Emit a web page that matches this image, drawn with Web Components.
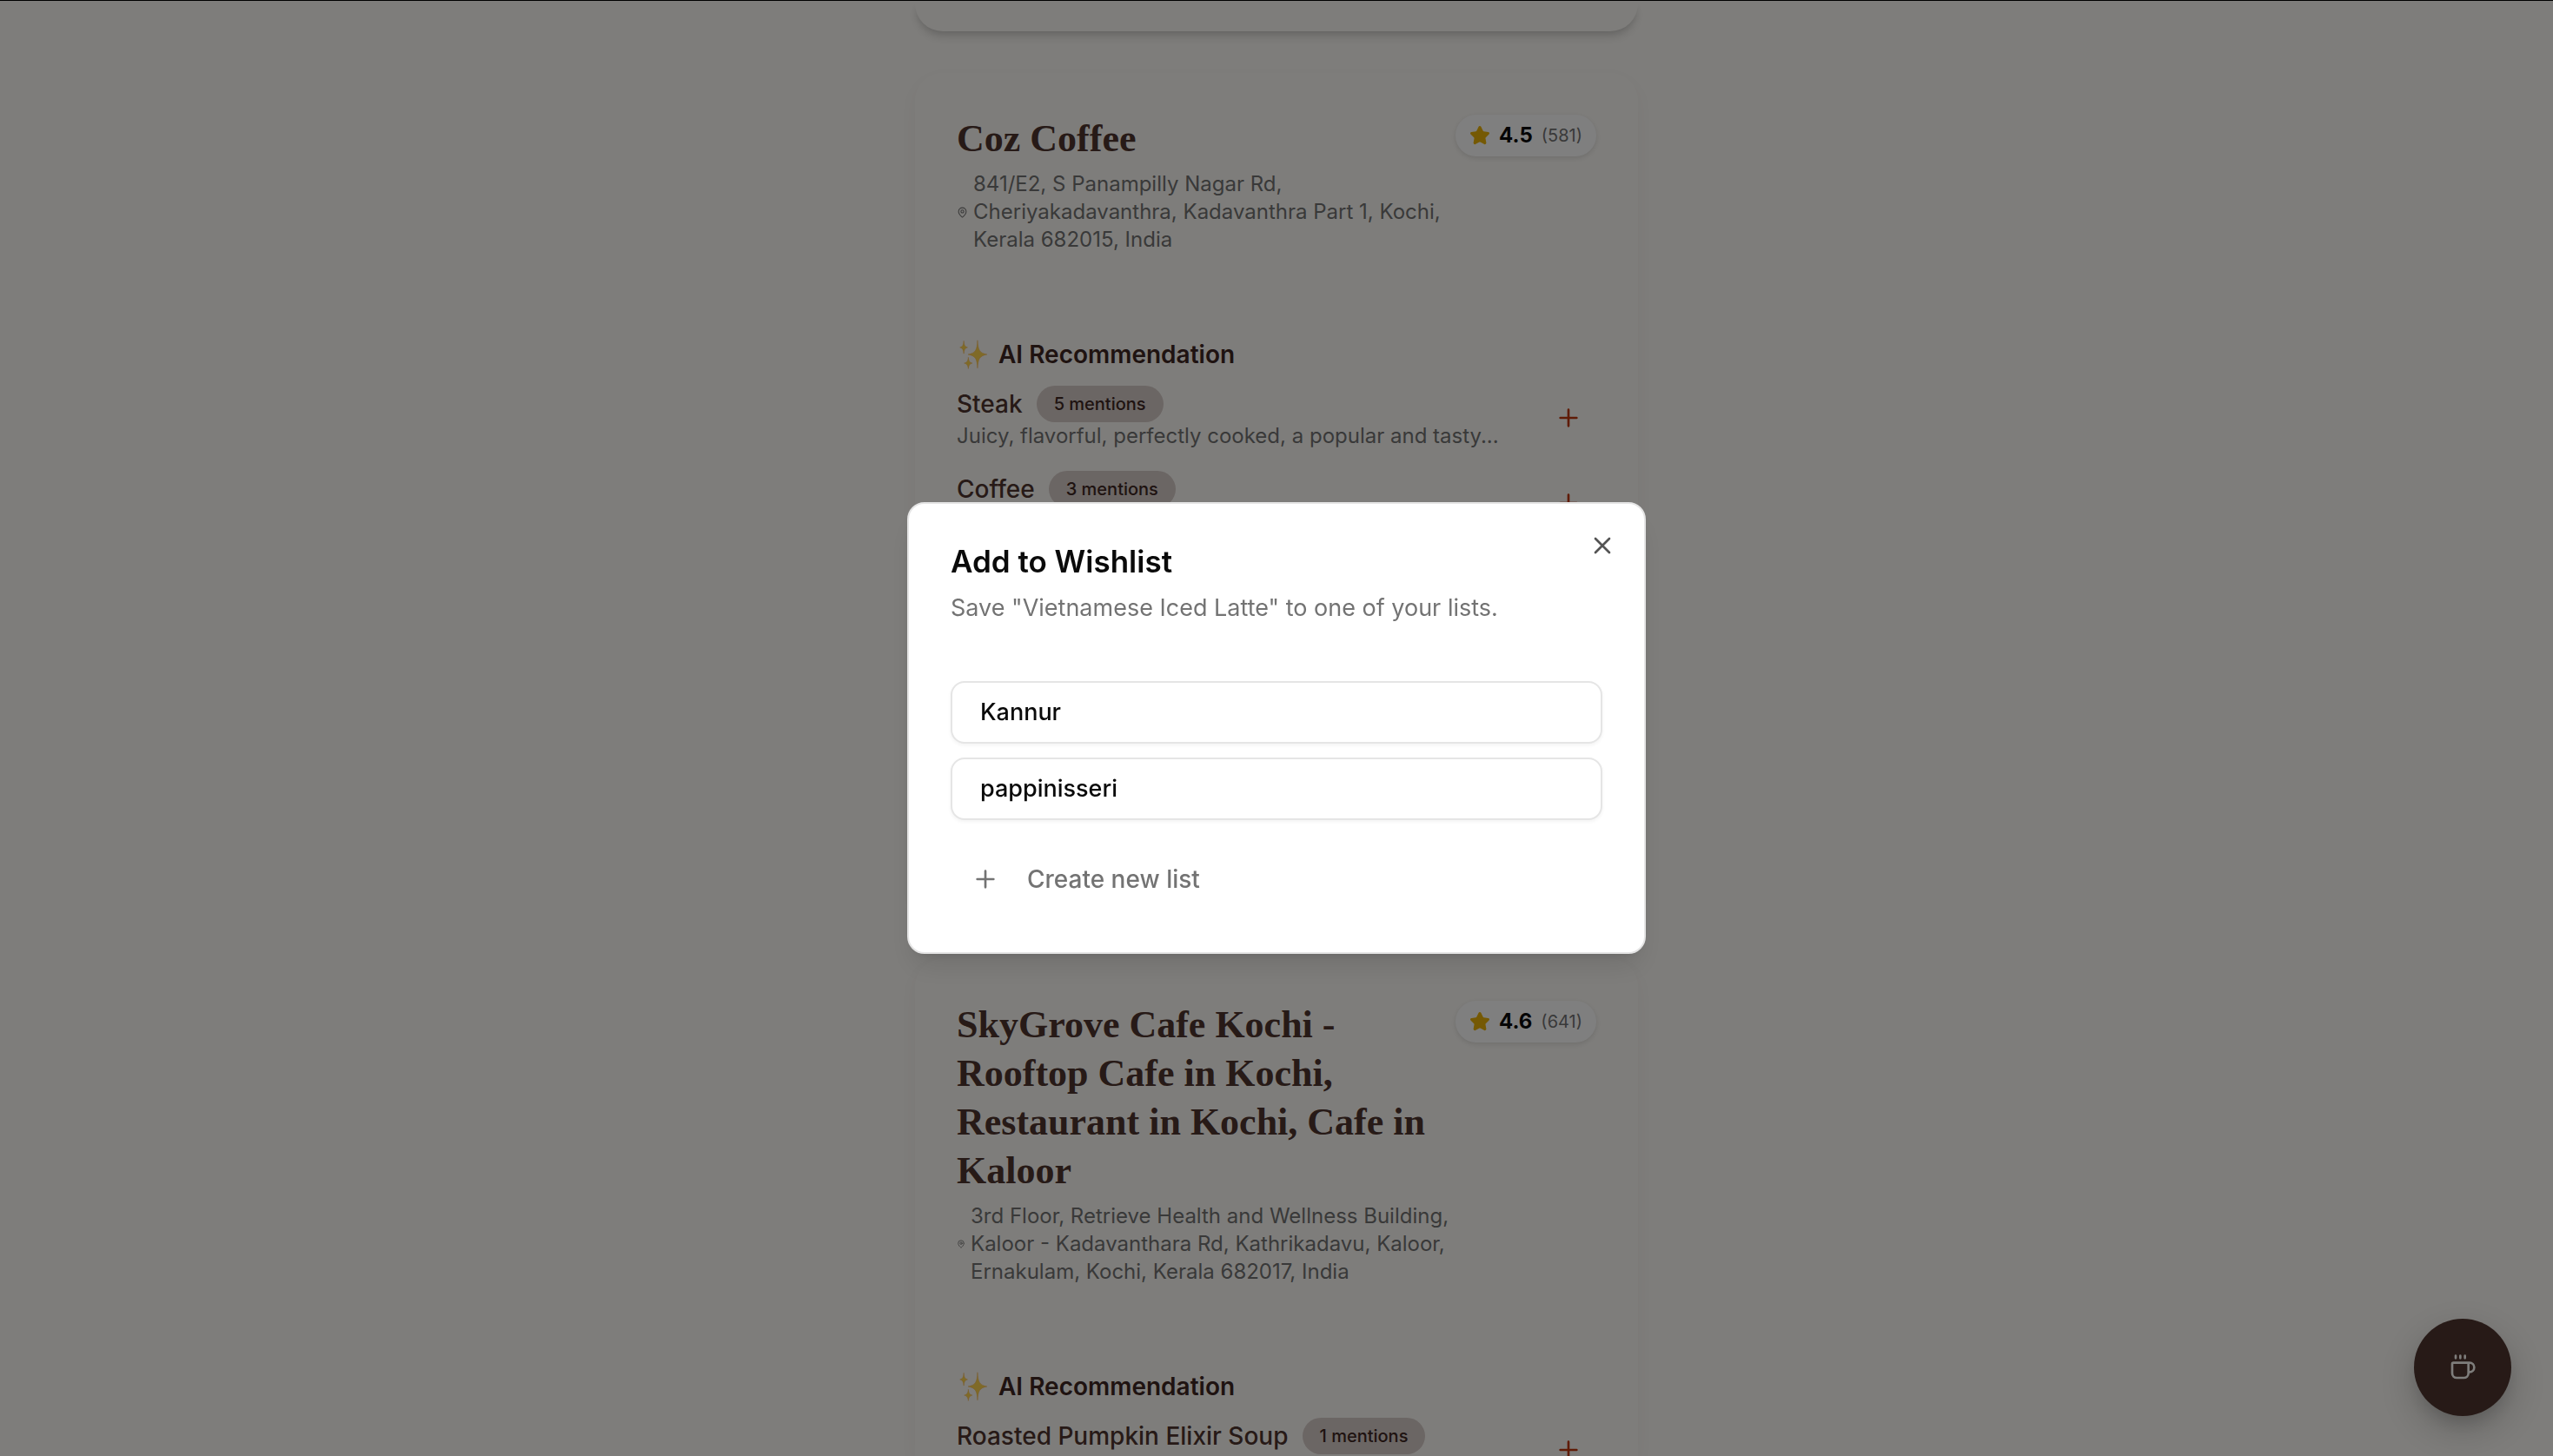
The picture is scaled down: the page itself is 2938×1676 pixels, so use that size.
<!DOCTYPE html>
<html lang="en">
<head>
<meta charset="utf-8">
<meta name="viewport" content="width=device-width, initial-scale=1">
<title>Cafes</title>
<style>
  html {
    height: 100%;
    overflow: hidden;
    background: #fdfbf7;
  }

  body {
    display: flex;
    flex-direction: column;
    height: 100%;
    margin: 0;
    box-sizing: border-box;
    overflow: hidden;
    border-top: 1px solid #000;
    color: #0a0a0a;
    font-family: Inter, "Liberation Sans", sans-serif;
    font-size: 28px;
    line-height: 40px;
  }
</style>
</head>
<body>

<cafe-feed>
  <cafe-card class="previous"></cafe-card>

  <cafe-card rating="4.5" reviews="581" pin="13">
    <span slot="name">Coz Coffee</span>
    <span slot="address">841/E2, S Panampilly Nagar Rd,<br>Cheriyakadavanthra, Kadavanthra Part 1, Kochi,<br>Kerala 682015, India</span>
    <dish-row mentions="5">
      Steak
      <span slot="note">Juicy, flavorful, perfectly cooked, a popular and tasty...</span>
    </dish-row>
    <dish-row mentions="3">Coffee</dish-row>
  </cafe-card>

  <cafe-card class="last" rating="4.6" reviews="641" pin="10">
    <span slot="name">SkyGrove Cafe Kochi - Rooftop Cafe in Kochi, Restaurant in Kochi, Cafe in Kaloor</span>
    <span slot="address">3rd Floor, Retrieve Health and Wellness Building,<br>Kaloor - Kadavanthara Rd, Kathrikadavu, Kaloor,<br>Ernakulam, Kochi, Kerala 682017, India</span>
    <dish-row mentions="1">Roasted Pumpkin Elixir Soup</dish-row>
  </cafe-card>
</cafe-feed>

<coffee-fab></coffee-fab>

<wishlist-dialog>
  <span slot="title">Add to Wishlist</span>
  <span slot="description">Save "Vietnamese Iced Latte" to one of your lists.</span>
  <list-option>Kannur</list-option>
  <list-option>pappinisseri</list-option>
</wishlist-dialog>

<script>
const ICONS = {
  plus: '<path d="M5 12h14M12 5v14"/>',
  close: '<path d="M18 6 6 18M6 6l12 12"/>',
  pin: '<path d="M20 10c0 5-5.5 10.2-7.4 11.8a1 1 0 0 1-1.2 0C9.5 20.2 4 15 4 10a8 8 0 0 1 16 0"/><circle cx="12" cy="10" r="3"/>',
  star: '<path fill="currentColor" d="M11.5 2.3a.53.53 0 0 1 .95 0l2.3 4.7a2.1 2.1 0 0 0 1.6 1.2l5.2.75a.53.53 0 0 1 .3.9l-3.75 3.65a2.1 2.1 0 0 0-.6 1.9l.9 5.14a.53.53 0 0 1-.77.56l-4.62-2.43a2.1 2.1 0 0 0-1.97 0L6.4 21.1a.53.53 0 0 1-.77-.56l.88-5.14a2.1 2.1 0 0 0-.6-1.88L2.16 9.8a.53.53 0 0 1 .3-.9l5.16-.76a2.1 2.1 0 0 0 1.6-1.16z"/>',
  coffee: '<path d="M10 2v2M14 2v2M6 2v2M16 8a1 1 0 0 1 1 1v8a4 4 0 0 1-4 4H7a4 4 0 0 1-4-4V9a1 1 0 0 1 1-1h14a4 4 0 1 1 0 8h-1"/>',
  sparkles: `<g fill="#ffd54f" stroke="#f0a93c" stroke-width=".3">
    <path d="M15.5.8C16 8.500 17 10.700 23.200 12 17 13.300 16 15.500 15.500 23.200 15 15.500 14 13.300 7.800 12 14 10.700 15 8.500 15.500.8Z"/>
    <path d="M4.300 1.200C4.600 4.300 5.200 5.700 7.400 6.300 5.200 6.900 4.600 8.300 4.300 11.400 4 8.300 3.400 6.900 1.200 6.300 3.400 5.700 4 4.300 4.300 1.200Z"/>
    <path d="M8 14.600C8.300 17.300 9 18.500 11.300 19.100 9 19.700 8.300 20.900 8 23.600 7.700 20.900 7 19.700 4.700 19.100 7 18.500 7.700 17.300 8 14.600Z"/>
  </g>`,
};

class AppIcon extends HTMLElement {
  connectedCallback() {
    const size = Number(this.getAttribute('size')) || 32;
    this.attachShadow({ mode: 'open' }).innerHTML = `
      <style>
        :host { display: block; flex: none; }
        svg { display: block; }
      </style>
      <svg width="${size}" height="${size}" viewBox="0 0 24 24" fill="none" stroke="currentColor"
        stroke-width="2" stroke-linecap="round" stroke-linejoin="round" aria-hidden="true">
        ${ICONS[this.getAttribute('name')]}
      </svg>
    `;
  }
}

class CafeFeed extends HTMLElement {
  constructor() {
    super();
    this.attachShadow({ mode: 'open' }).innerHTML = `
      <style>
        :host {
          display: flex;
          flex: 1;
          justify-content: center;
          min-height: 0;
          overflow: hidden;
        }
        main {
          display: flex;
          flex-direction: column;
          gap: 48px;
          width: 100%;
          max-width: 832px;
        }

        /* tail of the card that is scrolled out of view */
        ::slotted(.previous) {
          --card-radius: 0 0 32px 32px;
          --card-height: 35px;
          --card-shadow: 0 8px 12px -2px rgba(0, 0, 0, 0.14), 0 4px 8px -4px rgba(0, 0, 0, 0.12);
        }

        /* runs on below the fold, so it takes what is left */
        ::slotted(.last) {
          --card-radius: 32px 32px 0 0;
          --card-height: 0;
          flex: 1;
          overflow: hidden;
          clip-path: inset(-24px -32px 0);
        }
      </style>
      <main><slot></slot></main>
    `;
  }
}

class RatingPill extends HTMLElement {
  connectedCallback() {
    this.attachShadow({ mode: 'open' }).innerHTML = `
      <style>
        :host {
          display: flex;
          flex: none;
          align-items: center;
          gap: 10px;
          height: 48px;
          padding: 0 16px;
          border-radius: 24px;
          background: #fff;
          box-sizing: border-box;
          box-shadow: 0 2px 6px rgba(0, 0, 0, 0.12);
          font-size: 24px;
          line-height: 32px;
        }
        app-icon { color: #eab308; }
        b { color: #0a0a0a; font-weight: 700; }
        small { color: #737373; font-size: 20px; }
      </style>
      <app-icon name="star" size="24"></app-icon>
      <b>${this.getAttribute('value')}</b>
      <small>(${this.getAttribute('reviews')})</small>
    `;
  }
}

class CafeCard extends HTMLElement {
  connectedCallback() {
    const rating = this.getAttribute('rating');
    this.attachShadow({ mode: 'open' }).innerHTML = `
      <style>
        :host {
          display: block;
          flex: none;
          box-sizing: border-box;
          min-height: var(--card-height, 972px);
          border-radius: var(--card-radius, 32px);
          background: #fdfbf7;
          box-shadow: var(--card-shadow, 0 8px 24px rgba(78, 52, 46, 0.06));
        }
        article { padding: 48px 48px 0; }
        header {
          display: flex;
          align-items: flex-start;
          justify-content: space-between;
          gap: 16px;
          margin-bottom: 96px;
        }
        .info {
          flex: 1;
          min-width: 0;
        }
        h2 {
          margin: 0 0 8px;
          color: #4e342e;
          font-family: "Liberation Serif", serif;
          font-size: 44px;
          font-weight: 700;
          line-height: 56px;
        }
        .address {
          display: flex;
          align-items: center;
          gap: 6px;
          margin: 0;
          color: #737373;
          font-size: 24px;
          line-height: 32px;
          white-space: nowrap;
        }
        h3 {
          display: flex;
          align-items: center;
          gap: 12px;
          margin: 0 0 16px;
          padding-left: 2px;
          color: #3e2723;
          font-size: 28px;
          font-weight: 600;
          line-height: 40px;
        }
        .dishes {
          display: flex;
          flex-direction: column;
          gap: 24px;
        }
      </style>
      ${rating ? `
      <article>
        <header>
          <div class="info">
            <h2><slot name="name"></slot></h2>
            <p class="address">
              <app-icon name="pin" size="${this.getAttribute('pin')}"></app-icon>
              <slot name="address"></slot>
            </p>
          </div>
          <rating-pill value="${rating}" reviews="${this.getAttribute('reviews')}"></rating-pill>
        </header>
        <h3><app-icon name="sparkles" size="34"></app-icon>AI Recommendation</h3>
        <div class="dishes"><slot></slot></div>
      </article>` : ''}
    `;
  }
}

class DishRow extends HTMLElement {
  connectedCallback() {
    this.attachShadow({ mode: 'open' }).innerHTML = `
      <style>
        :host {
          display: flex;
          align-items: center;
          justify-content: space-between;
          min-height: 74px;
        }
        .text { align-self: flex-start; }
        .name {
          display: flex;
          align-items: center;
          gap: 16px;
          height: 42px;
          color: #4e342e;
          font-weight: 500;
        }
        .mentions {
          padding: 5px 20px;
          border-radius: 21px;
          background: #d7ccc8;
          color: #3e2723;
          font-size: 20px;
          line-height: 32px;
        }
        .note {
          color: #737373;
          font-size: 24px;
          line-height: 32px;
        }
        button {
          display: grid;
          place-items: center;
          width: 64px;
          height: 64px;
          padding: 0;
          border: 0;
          background: none;
          color: #bf360c;
        }
      </style>
      <div class="text">
        <div class="name">
          <span><slot></slot></span>
          <span class="mentions">${this.getAttribute('mentions')} mentions</span>
        </div>
        <div class="note"><slot name="note"></slot></div>
      </div>
      <button type="button" aria-label="Add to wishlist"><app-icon name="plus"></app-icon></button>
    `;
  }
}

class CoffeeFab extends HTMLElement {
  constructor() {
    super();
    this.attachShadow({ mode: 'open' }).innerHTML = `
      <style>
        :host {
          display: block;
          position: fixed;
          right: 48px;
          bottom: 46px;
        }
        button {
          display: grid;
          place-items: center;
          width: 112px;
          height: 112px;
          padding: 0;
          border: 0;
          border-radius: 50%;
          background: #4e342e;
          color: #fdfbf7;
          box-shadow: 0 16px 48px rgba(0, 0, 0, 0.2), 0 12px 24px -8px rgba(0, 0, 0, 0.2);
        }
      </style>
      <button type="button" aria-label="Coffee menu"><app-icon name="coffee"></app-icon></button>
    `;
  }
}

class ListOption extends HTMLElement {
  constructor() {
    super();
    this.attachShadow({ mode: 'open' }).innerHTML = `
      <style>
        :host { display: block; }
        button {
          display: block;
          box-sizing: border-box;
          width: 100%;
          height: 72px;
          padding: 0 32px;
          border: 2px solid #e5e5e5;
          border-radius: 16px;
          background: #fff;
          box-shadow: 0 2px 4px rgba(0, 0, 0, 0.05);
          color: #0a0a0a;
          font: inherit;
          font-weight: 500;
          text-align: left;
        }
      </style>
      <button type="button"><slot></slot></button>
    `;
  }
}

class WishlistDialog extends HTMLElement {
  constructor() {
    super();
    this.attachShadow({ mode: 'open' }).innerHTML = `
      <style>
        :host {
          display: grid;
          place-items: center;
          position: fixed;
          inset: 0;
          background: rgba(0, 0, 0, 0.5);
          font-size: 27px;
        }
        section {
          position: relative;
          box-sizing: border-box;
          width: 100%;
          max-width: 850px;
          padding: 48px;
          border: 2px solid #e5e5e5;
          border-radius: 20px;
          background: #fff;
          box-shadow: 0 20px 30px -6px rgba(0, 0, 0, 0.1), 0 8px 12px -8px rgba(0, 0, 0, 0.1);
        }
        h2 {
          margin: 0 0 16px;
          font-size: 35px;
          font-weight: 600;
          line-height: 36px;
        }
        p {
          margin: 0 0 64px;
          color: #737373;
        }
        .lists {
          display: flex;
          flex-direction: column;
          gap: 16px;
          margin-bottom: 32px;
        }
        button {
          padding: 0;
          border: 0;
          background: none;
          font: inherit;
        }
        .create {
          display: flex;
          align-items: center;
          gap: 32px;
          width: 100%;
          height: 72px;
          padding: 0 24px;
          color: #737373;
          font-size: 28px;
          font-weight: 500;
        }
        .close {
          position: absolute;
          top: 32px;
          right: 32px;
          color: #545454;
        }
      </style>
      <section role="dialog" aria-modal="true" aria-labelledby="title">
        <h2 id="title"><slot name="title"></slot></h2>
        <p><slot name="description"></slot></p>
        <div class="lists"><slot></slot></div>
        <button class="create" type="button"><app-icon name="plus"></app-icon>Create new list</button>
        <button class="close" type="button" aria-label="Close"><app-icon name="close"></app-icon></button>
      </section>
    `;
    this.shadowRoot.querySelector('.close').addEventListener('click', () => this.remove());
  }
}

customElements.define('app-icon', AppIcon);
customElements.define('cafe-feed', CafeFeed);
customElements.define('rating-pill', RatingPill);
customElements.define('cafe-card', CafeCard);
customElements.define('dish-row', DishRow);
customElements.define('coffee-fab', CoffeeFab);
customElements.define('list-option', ListOption);
customElements.define('wishlist-dialog', WishlistDialog);
</script>
</body>
</html>
